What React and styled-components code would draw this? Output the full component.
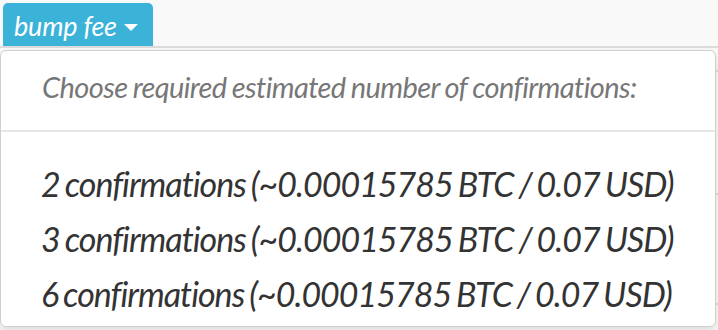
import React from "react";
import styled, { createGlobalStyle } from "styled-components";

const GlobalStyle = createGlobalStyle`
    html, body {
        margin: 0;
        padding: 0;
        background-color: #f9f9f9;
        font-family: 'Lato', 'Open Sans', sans-serif;
    }
`;

const Page = styled.div`
    position: relative;
    width: 718px;
    height: 330px;
    overflow: hidden;
`;

const Toolbar = styled.div`
    display: flex;
    align-items: flex-end;
    height: 48px;
    padding-left: 3px;
    border-bottom: 2px solid #dcdcdc;
    box-sizing: border-box;
`;

const FeeButton = styled.button`
    display: flex;
    align-items: center;
    gap: 7px;
    height: 43px;
    width: 150px;
    padding: 2px 0 0 11px;
    border: none;
    border-radius: 5px 5px 0 0;
    background-color: #3bb2d8;
    color: #ffffff;
    font-family: 'Lato', sans-serif;
    font-style: italic;
    font-size: 27px;
    letter-spacing: -0.2px;
    cursor: pointer;
`;

const Caret = styled.span`
    width: 0;
    height: 0;
    margin-top: 4px;
    border-left: 7px solid transparent;
    border-right: 7px solid transparent;
    border-top: 7px solid #ffffff;
`;

const Table = styled.div`
    display: flex;
    flex-direction: column;
`;

const TableRow = styled.div`
    height: ${(p) => p.h}px;
    border-bottom: 2px solid #dedede;
    box-sizing: border-box;
`;

const Menu = styled.div`
    position: absolute;
    top: 50px;
    left: 0;
    width: 716px;
    height: 277px;
    box-sizing: border-box;
    background-color: #ffffff;
    border: 1px solid #cfcfcf;
    border-radius: 6px;
    box-shadow: 0 4px 10px rgba(0, 0, 0, 0.12);
    display: flex;
    flex-direction: column;
`;

const MenuHeader = styled.div`
    height: 81px;
    padding: 18px 0 0 41px;
    box-sizing: border-box;
    border-bottom: 2px solid #e6e6e6;
    font-style: italic;
    font-size: 29px;
    letter-spacing: -0.6px;
    word-spacing: -1px;
    color: #777777;
`;

const MenuList = styled.div`
    display: flex;
    flex-direction: column;
    padding-top: 24px;
`;

const MenuItem = styled.div`
    height: 55px;
    display: flex;
    align-items: center;
    padding-left: 40px;
    font-style: italic;
    font-size: 34px;
    letter-spacing: -1px;
    word-spacing: -2px;
    color: #333333;
    cursor: pointer;
`;

const options = [2, 3, 6];

const App = () => {
    return (
        <Page>
            <GlobalStyle />
            <Toolbar>
                <FeeButton>
                    bump fee <Caret />
                </FeeButton>
            </Toolbar>
            <Table>
                <TableRow h={24} />
                <TableRow h={123} />
                <TableRow h={110} />
            </Table>
            <Menu>
                <MenuHeader>Choose required estimated number of confirmations:</MenuHeader>
                <MenuList>
                    {options.map((n) => (
                        <MenuItem key={n}>
                            {n} confirmations (~0.00015785 BTC / 0.07 USD)
                        </MenuItem>
                    ))}
                </MenuList>
            </Menu>
        </Page>
    );
};

export default App;
